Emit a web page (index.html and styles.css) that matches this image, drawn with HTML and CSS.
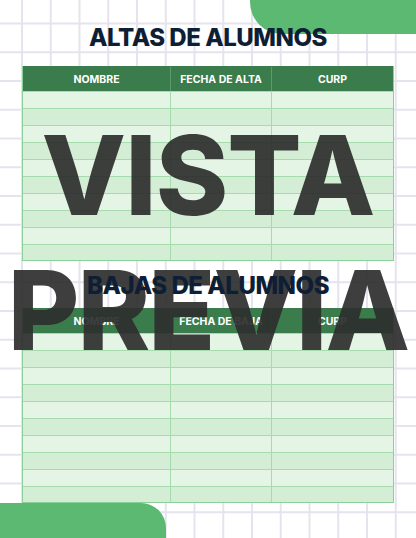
FILE: index.html
```html
<!DOCTYPE html>
<html lang="es">
<head>
<meta charset="utf-8">
<title>Altas y bajas de alumnos</title>
<link rel="stylesheet" href="styles.css">
</head>
<body>
<div class="page">
  <div class="blob blob-top"></div>
  <div class="blob blob-bottom"></div>

  <section class="section section-altas">
    <h1 class="title">ALTAS DE ALUMNOS</h1>
    <div class="sheet">
      <div class="row head"><div class="cell">NOMBRE</div><div class="cell">FECHA DE ALTA</div><div class="cell">CURP</div></div>
      <div class="row"><div class="cell"></div><div class="cell"></div><div class="cell"></div></div>
      <div class="row"><div class="cell"></div><div class="cell"></div><div class="cell"></div></div>
      <div class="row"><div class="cell"></div><div class="cell"></div><div class="cell"></div></div>
      <div class="row"><div class="cell"></div><div class="cell"></div><div class="cell"></div></div>
      <div class="row"><div class="cell"></div><div class="cell"></div><div class="cell"></div></div>
      <div class="row"><div class="cell"></div><div class="cell"></div><div class="cell"></div></div>
      <div class="row"><div class="cell"></div><div class="cell"></div><div class="cell"></div></div>
      <div class="row"><div class="cell"></div><div class="cell"></div><div class="cell"></div></div>
      <div class="row"><div class="cell"></div><div class="cell"></div><div class="cell"></div></div>
      <div class="row"><div class="cell"></div><div class="cell"></div><div class="cell"></div></div>
    </div>
  </section>

  <section class="section section-bajas">
    <h1 class="title">BAJAS DE ALUMNOS</h1>
    <div class="sheet">
      <div class="row head"><div class="cell">NOMBRE</div><div class="cell">FECHA DE BAJA</div><div class="cell">CURP</div></div>
      <div class="row"><div class="cell"></div><div class="cell"></div><div class="cell"></div></div>
      <div class="row"><div class="cell"></div><div class="cell"></div><div class="cell"></div></div>
      <div class="row"><div class="cell"></div><div class="cell"></div><div class="cell"></div></div>
      <div class="row"><div class="cell"></div><div class="cell"></div><div class="cell"></div></div>
      <div class="row"><div class="cell"></div><div class="cell"></div><div class="cell"></div></div>
      <div class="row"><div class="cell"></div><div class="cell"></div><div class="cell"></div></div>
      <div class="row"><div class="cell"></div><div class="cell"></div><div class="cell"></div></div>
      <div class="row"><div class="cell"></div><div class="cell"></div><div class="cell"></div></div>
      <div class="row"><div class="cell"></div><div class="cell"></div><div class="cell"></div></div>
      <div class="row"><div class="cell"></div><div class="cell"></div><div class="cell"></div></div>
    </div>
  </section>

  <div class="watermark">
    <div class="wm-line wm-vista">VISTA</div>
    <div class="wm-line wm-previa">PREVIA</div>
  </div>
</div>
</body>
</html>
```

FILE: styles.css
```css
* { box-sizing: border-box; margin: 0; padding: 0; }

html, body { width: 416px; height: 538px; overflow: hidden; background: #ffffff; }

.page {
  position: relative;
  width: 416px;
  height: 538px;
  overflow: hidden;
  font-family: Inter, "Liberation Sans", sans-serif;
  background-color: #ffffff;
  background-image:
    linear-gradient(to right, #e5e3ed 1.5px, transparent 1.5px),
    linear-gradient(to bottom, #e5e3ed 1.5px, transparent 1.5px);
  background-size: 28.75px 28.75px;
  background-position: 21px 22.5px;
}

.blob {
  position: absolute;
  background: #5bb972;
}
.blob-top {
  left: 250px;
  top: -20px;
  width: 200px;
  height: 54px;
  border-bottom-left-radius: 32px;
  z-index: 1;
}
.blob-bottom {
  left: -10px;
  top: 503px;
  width: 176px;
  height: 60px;
  border-top-right-radius: 25px;
  z-index: 1;
}

.section {
  position: relative;
  display: flex;
  flex-direction: column;
  align-items: stretch;
  padding: 0 22px;
}
.section-altas { padding-top: 23px; }
.section-bajas { padding-top: 10px; }

.title {
  position: relative;
  z-index: 5;
  font-size: 24px;
  line-height: 29px;
  font-weight: 800;
  color: #0e1f35;
  text-align: center;
  letter-spacing: -0.45px;
}
.section-altas .title { margin-bottom: 14px; }
.section-bajas .title { margin-bottom: 8px; }

.sheet {
  position: relative;
  z-index: 2;
  border: 1px solid #8dcf9a;
  border-top: 0;
  background: #e4f5e6;
}

.row {
  display: grid;
  grid-template-columns: 147px 101px 1fr;
  height: 17px;
  border-top: 1px solid #a6dbae;
}
.row:nth-child(odd) { background: #d4eed6; }
.row:nth-child(even) { background: #e4f5e6; }
.row:last-child { height: 16px; }

.cell { border-left: 1px solid #a6dbae; }
.cell:first-child { border-left: 0; }

.row.head {
  height: 25px;
  border-top: 1px solid #3a7c4b;
  background: #3a7c4b;
  align-items: center;
}
.head .cell {
  height: 100%;
  display: flex;
  align-items: center;
  justify-content: center;
  color: #ffffff;
  font-size: 10.5px;
  font-weight: 700;
  border-left-color: #5d9b6c;
}

.watermark {
  position: absolute;
  left: 0;
  right: 0;
  top: 108px;
  z-index: 4;
  display: flex;
  flex-direction: column;
  align-items: center;
  pointer-events: none;
}
.wm-line {
  font-family: Inter, "Liberation Sans", sans-serif;
  font-size: 110px;
  line-height: 135px;
  font-weight: 800;
  color: rgba(46, 46, 46, 0.92);
  white-space: nowrap;
}
.wm-vista { letter-spacing: -1px; }
.wm-previa { letter-spacing: -2px; }
```
